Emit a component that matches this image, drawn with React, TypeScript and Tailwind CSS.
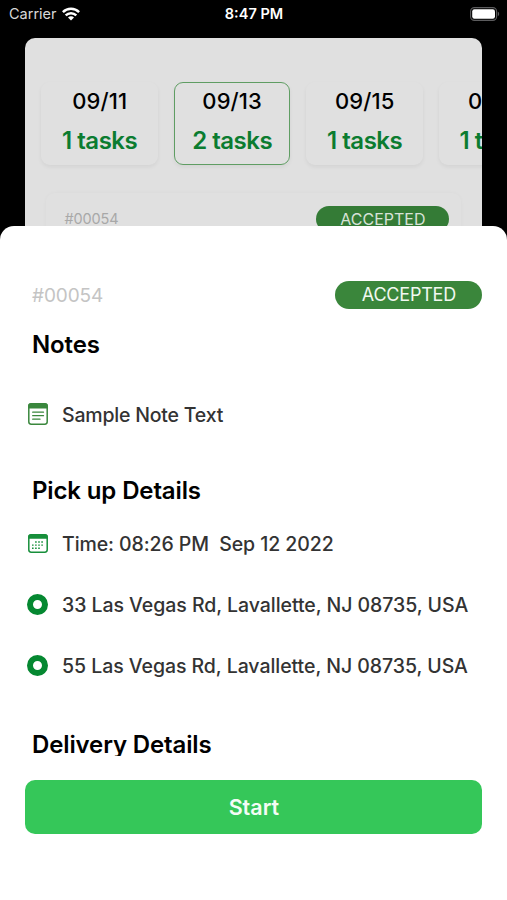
import type { ReactNode } from "react";

type DayTab = { date: string; tasks: string; active?: boolean };

const DAYS: DayTab[] = [
  { date: "09/11", tasks: "1 tasks" },
  { date: "09/13", tasks: "2 tasks", active: true },
  { date: "09/15", tasks: "1 tasks" },
  { date: "09/17", tasks: "1 tasks" },
];

function WifiIcon() {
  return (
    <svg width="18" height="14" viewBox="0 0 18 14" fill="none" stroke="#fff" strokeWidth="2.5">
      <path d="M0.9 5.1a11.6 11.6 0 0 1 16.2 0" />
      <path d="M3.7 8.4a7.6 7.6 0 0 1 10.6 0" />
      <path d="M9 13.6 6 10.6a4.2 4.2 0 0 1 6 0Z" fill="#fff" stroke="none" />
    </svg>
  );
}

function BatteryIcon() {
  return (
    <svg width="30" height="14" viewBox="0 0 30 14">
      <rect x="0.6" y="0.6" width="26" height="12.8" rx="3.8" fill="none" stroke="#5c5c5e" strokeWidth="1.1" />
      <rect x="2.2" y="2.2" width="22.8" height="9.6" rx="2.2" fill="#fff" />
      <path d="M27.8 4.8c1.8.6 1.8 3.8 0 4.4z" fill="#5c5c5e" />
    </svg>
  );
}

function NoteIcon() {
  return (
    <svg width="20" height="22" viewBox="0 0 20 22">
      <rect x="0.8" y="0.8" width="18.4" height="20.4" rx="2.4" fill="#fff" stroke="#3a873d" strokeWidth="1.5" />
      <path d="M0.2 5.4V3Q0.2 0.2 3 0.2H17Q19.8 0.2 19.8 3V5.4Z" fill="#3a873d" />
      <path d="M4.7 9.2H15.5M4.7 12.7H15.5M4.7 16.2H12" stroke="#3a873d" strokeWidth="1.3" strokeLinecap="round" />
    </svg>
  );
}

function CalendarIcon() {
  return (
    <svg width="20" height="19" viewBox="0 0 20 19">
      <rect x="0.8" y="0.8" width="18.4" height="17.4" rx="2.4" fill="#fff" stroke="#178f3b" strokeWidth="1.5" />
      <path d="M0.2 4.8V3Q0.2 0.2 3 0.2H17Q19.8 0.2 19.8 3V4.8Z" fill="#178f3b" />
      <path
        d="M7.1 8H16.2M4 11.1H16.2M4 14.3H13"
        stroke="#178f3b"
        strokeWidth="1.4"
        strokeDasharray="1.6 1.5"
      />
    </svg>
  );
}

function LocationIcon() {
  return <span className="block size-[21px] rounded-full border-[6.5px] border-[#058831] bg-white" />;
}

function SectionTitle({ className, children }: { className: string; children: ReactNode }) {
  return (
    <h2 className={`pl-8 text-[24px] leading-7 font-semibold tracking-[-0.13px] text-black ${className}`}>{children}</h2>
  );
}

function DetailRow({ icon, className, children }: { icon: ReactNode; className: string; children: ReactNode }) {
  return (
    <div className={`flex items-center pl-[27px] ${className}`}>
      <span className="flex w-[21px] shrink-0 justify-center">{icon}</span>
      <span className="ml-3.5 pt-px whitespace-pre text-[19.5px] leading-6 font-medium text-[#333]">{children}</span>
    </div>
  );
}

export default function App() {
  return (
    <div className="relative h-[900px] w-[507px] overflow-hidden bg-black font-['Inter',sans-serif]">
      {/* Status bar */}
      <div className="grid h-[38px] grid-cols-3 items-start pt-1 pr-[7px] pl-[9px] text-[14.5px] leading-5 text-white">
        <div className="flex items-center gap-[5px] text-[#d8d8d8]">
          <span>Carrier</span>
          <WifiIcon />
        </div>
        <div className="pr-px text-center font-semibold">8:47 PM</div>
        <div className="flex h-[19px] items-center justify-end">
          <BatteryIcon />
        </div>
      </div>

      {/* Task list behind the sheet */}
      <div className="mr-[24.6px] ml-[25.4px] h-[240px] overflow-hidden rounded-t-[10px] bg-[#e0e0e0] pt-[43.5px]">
        <div className="flex gap-[16px] pl-4">
          {DAYS.map(d => (
            <div
              key={d.date}
              className={`flex h-[83px] w-[116.5px] shrink-0 flex-col items-center rounded-[9px] pt-[5px] shadow-[0_2px_4px_rgba(0,0,0,0.06)] ${
                d.active ? "border border-[#5f9d63]" : "border border-transparent"
              }`}
            >
              <span className="text-[22px] leading-[26px] font-medium tracking-[0.1px] text-black">{d.date}</span>
              <span className="mt-3.5 text-[24px] leading-[26px] font-semibold tracking-[-0.5px] text-[#0b7c30]">{d.tasks}</span>
            </div>
          ))}
        </div>
        <div className="mx-[21px] mt-7 flex h-20 items-start justify-between rounded-[9px] pt-[13px] pr-3 pl-[18px] shadow-[0_0_4px_rgba(0,0,0,0.03)]">
          <span className="mt-px text-[14.5px] leading-6 tracking-[-0.1px] text-[#a8a8a8]">#00054</span>
          <span className="h-[26px] w-[133px] rounded-full bg-[#347b36] text-center text-[16px] leading-[26px] text-[#d8e2d8]">ACCEPTED</span>
        </div>
      </div>

      {/* Task details sheet */}
      <div className="absolute inset-x-0 top-[225.6px] bottom-0 rounded-t-[14px] bg-white">
        <div className="h-[530px] overflow-hidden">
          <div className="flex items-start justify-between pt-[55px] pr-[24.6px] pl-8">
            <span className="pt-px text-[19px] leading-7 tracking-[-0.1px] text-[#c4c4c4]">#00054</span>
            <span className="h-7 w-[147px] rounded-full bg-[#3a863b] text-center text-[18px] leading-7 tracking-[-0.2px] text-[#f1f8f1]">ACCEPTED</span>
          </div>
          <SectionTitle className="mt-[21px]">Notes</SectionTitle>
          <DetailRow className="mt-[43px]" icon={<NoteIcon />}><span className="tracking-[-0.2px]">Sample Note Text</span></DetailRow>

          <SectionTitle className="mt-[50px]">Pick up Details</SectionTitle>
          <DetailRow className="mt-[26px]" icon={<CalendarIcon />}><span className="tracking-[-0.08px]">{"Time: 08:26 PM  Sep 12 2022"}</span></DetailRow>
          <DetailRow className="mt-9" icon={<LocationIcon />}><span className="tracking-[-0.05px]">33 Las Vegas Rd, Lavallette, NJ 08735, USA</span></DetailRow>
          <DetailRow className="mt-9" icon={<LocationIcon />}><span className="tracking-[-0.05px]">55 Las Vegas Rd, Lavallette, NJ 08735, USA</span></DetailRow>

          <SectionTitle className="mt-[53px]">Delivery Details</SectionTitle>
        </div>
        <div className="pt-[24.5px] pr-[24.6px] pl-[25.4px]">
          <button className="block h-[53.5px] w-full rounded-[10px] bg-[#35c759] text-[21.5px] font-semibold text-[#f3fcf5]">Start</button>
        </div>
      </div>
    </div>
  );
}
